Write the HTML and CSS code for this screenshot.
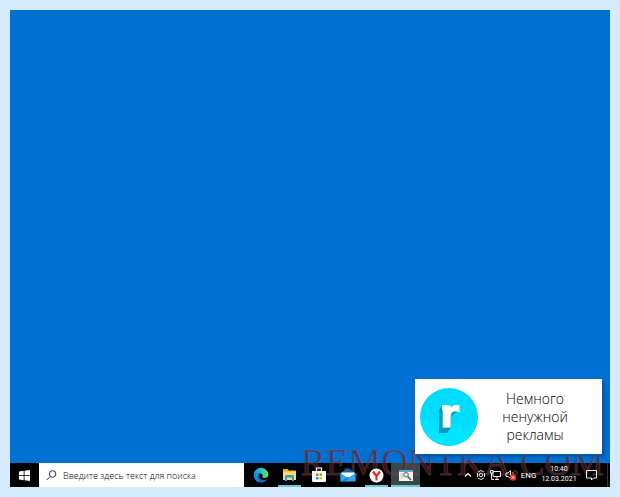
FILE: index.html
```html
<!DOCTYPE html>
<html lang="ru">
<head>
<meta charset="utf-8">
<title>Рабочий стол</title>
<link rel="stylesheet" href="styles.css">
</head>
<body>
<main class="desktop">
  <section class="wallpaper">
    <aside class="toast">
      <svg class="toast-logo" viewBox="0 0 58 58" aria-hidden="true">
        <circle cx="29" cy="29" r="29" fill="#00dcfc"/>
        <path d="M1 36Q8 29 15 34Q22 42 31 37Q39 35 43 41Q50 37 56 39A29 29 0 0 1 1 36Z" fill="#00e5ff"/>
        <path d="M22 18L19 22V45H27L31 40V28L37 24V19Z" fill="#079cb4"/>
        <path d="M22 17H27V22H22Z" fill="#fff"/>
        <text class="logo-letter" x="20" y="39">r</text>
      </svg>
      <p class="toast-text">Немного ненужной рекламы</p>
    </aside>
  </section>
  <footer class="taskbar">
    <button class="start" aria-label="Пуск">
      <svg width="11" height="11" viewBox="0 0 11 11" fill="#fff"><path d="M0 1.5L4.7 .8V5H0ZM5.5 .7L11 0V5H5.500ZM0 5.800H4.700V10.200L0 9.500ZM5.500 5.800H11V11L5.500 10.300Z"/></svg>
    </button>
    <label class="search">
      <svg width="11" height="11" viewBox="0 0 11 11" fill="none" stroke="#333" stroke-width="1"><circle cx="6.600" cy="4" r="3.300"/><path d="M4.200 6.400L.7 10"/></svg>
      <input type="text" placeholder="Введите здесь текст для поиска" aria-label="Поиск">
    </label>
    <nav class="apps">
      <button class="app" aria-label="Edge">
        <svg width="16" height="16" viewBox="0 0 16 16">
          <defs>
            <linearGradient id="sea" x1="0" x2="1"><stop stop-color="#159de9"/><stop offset=".5" stop-color="#22c3cf"/><stop offset="1" stop-color="#66df4d"/></linearGradient>
            <linearGradient id="deep" x2="0" y2="1"><stop stop-color="#1698e8"/><stop offset="1" stop-color="#0a86dd"/></linearGradient>
          </defs>
          <path d="M.7 8A7.400 7.400 0 0 1 15.400 7Q15.600 11 11.600 11Q8.500 11 9.400 9.200Q10 7 7.500 6.500Q3.500 5 .7 8Z" fill="url(#sea)"/>
          <path d="M.7 8Q3 4.700 6.500 6Q4 11 9 13Q12 14 14 12Q11.500 15.700 7.700 15.500Q1 15 .7 8Z" fill="url(#deep)"/>
          <path d="M6.500 7Q5 12.500 10 13Q12.300 13.300 14 12Q12 15.500 9 15.200Q4.500 14 4.500 10Q4.600 7.800 6.500 7Z" fill="#1268bd"/>
        </svg>
      </button>
      <button class="app running" aria-label="Проводник">
        <svg width="15" height="14" viewBox="0 0 15 14"><path d="M1 1H5.500L7 2.500H14V5H1Z" fill="#eeb51d"/><path d="M1 3.500H14V12H1Z" fill="#ffdc5c"/><path d="M3 13V8.500Q3 7 4.500 7H10.500Q12 7 12 8.500V13H10V9.500H5V13Z" fill="#269be8"/></svg>
      </button>
      <button class="app" aria-label="Магазин">
        <svg width="16" height="16" viewBox="0 0 16 16"><path d="M5.500 5V1H10.500V5" fill="none" stroke="#fff" stroke-width="1.200"/><path d="M1 4H15V13.500Q15 15 13.500 15H2.500Q1 15 1 13.500Z" fill="#fff"/><path d="M5 6.500H7.500V9H5Z" fill="#f25022"/><path d="M8.500 6.500H11V9H8.500Z" fill="#7fba00"/><path d="M5 10H7.500V12.500H5Z" fill="#00a4ef"/><path d="M8.500 10H11V12.500H8.500Z" fill="#ffb900"/></svg>
      </button>
      <button class="app" aria-label="Почта">
        <svg width="16" height="16" viewBox="0 0 16 16"><path d="M.5 6L8 1L15.500 6V14H.5Z" fill="#1167b1"/><path d="M1.500 5.500H14.500V9L8 13L1.500 9Z" fill="#fff"/><path d="M.5 6L8 11L15.500 6V14.500H.5Z" fill="#2caaf4"/><path d="M.5 14.500L8 9.800L10 11L4 14.500Z" fill="#1588db"/></svg>
      </button>
      <button class="app running" aria-label="Яндекс Браузер">
        <svg width="15" height="15" viewBox="0 0 15 15"><circle cx="7.500" cy="7.500" r="7" fill="#fff"/><path d="M4 3.500L7.500 8L11 3.500M7.500 7.500V12.500" fill="none" stroke="#ef2018" stroke-width="2.100"/></svg>
      </button>
      <button class="app running active" aria-label="Просмотр окна">
        <svg width="14" height="13" viewBox="0 0 14 13"><path d="M0 1H14V12H0Z" fill="#f3f3ee"/><path d="M0 1H14V3H0Z" fill="#58a9d8"/><path d="M1.500 5H4M1.500 7H4M1.500 9H4" stroke="#9ba8ad" stroke-width=".7"/><circle cx="7" cy="5.700" r="2.300" fill="#dceff6" stroke="#555" stroke-width=".9"/><path d="M8.700 7.500L12 11" stroke="#555" stroke-width="1.500"/></svg>
      </button>
    </nav>
    <div class="tray">
      <button aria-label="Скрытые значки"><svg width="8" height="10" viewBox="0 0 8 10" fill="none" stroke="#fff" stroke-width="1.100"><path d="M1 6.500L4 3.500L7 6.500"/></svg></button>
      <button aria-label="Собрание"><svg width="10" height="12" viewBox="0 0 10 12" fill="none" stroke="#e4e4e4"><path d="M2 3Q5 0 8 3M2 9Q5 12 8 9M1.500 4V8M8.500 4V8"/><circle cx="5" cy="6" r="1.800"/></svg></button>
      <button aria-label="Сеть"><svg width="11" height="12" viewBox="0 0 11 12" fill="none" stroke="#e8e8e8"><path d="M3 2.500H10.500V7.500H3ZM5 10.500H9M7 7.500V10M.5 1.500H3V4H.5ZM1.500 4V10.500H4"/></svg></button>
      <button aria-label="Звук отключён"><svg width="12" height="12" viewBox="0 0 12 12"><path d="M1 4H3L5.500 1.500V9.500L3 7.500H1Z" fill="none" stroke="#eee"/><path d="M7 3Q9 5 8 6" fill="none" stroke="#999"/><circle cx="8" cy="8.500" r="3.200" fill="#e32b22"/><path d="M6.700 7.200L9.300 9.800M9.300 7.200L6.700 9.800" stroke="#fff" stroke-width=".9"/></svg></button>
    </div>
    <button class="language">ENG</button>
    <time class="clock" datetime="2021-03-12T10:40">10:40<br>12.03.2021</time>
    <button class="notifications" aria-label="Уведомления"><svg width="11" height="12" viewBox="0 0 11 12" fill="none" stroke="#eee"><path d="M.5 1.500H10.500V9H7.500L5.500 11V9H.5Z"/></svg></button>
    <button class="show-desktop" aria-label="Свернуть все окна"></button>
  </footer>
  <div class="watermark">REMONTKA.COM</div>
</main>
</body>
</html>
```
FILE: styles.css
```css
* { box-sizing: border-box; }
body {
  margin: 0;
  padding: 10px;
  min-height: 100vh;
  display: flex;
  background: #d5ebff;
  font-family: "Open Sans", "Noto Sans", sans-serif;
}
button {
  margin: 0;
  padding: 0;
  border: 0;
  background: none;
  color: #fff;
  font: inherit;
  display: flex;
  align-items: center;
  justify-content: center;
}
svg { display: block; flex: none; }
.desktop {
  position: relative;
  flex: 1;
  display: flex;
  flex-direction: column;
  overflow: hidden;
  background: #0070d3;
}
.wallpaper {
  flex: 1;
  display: flex;
  align-items: flex-end;
  justify-content: flex-end;
  padding: 9px 8px;
}
.toast {
  position: relative;
  z-index: 2;
  display: flex;
  align-items: center;
  gap: 8px;
  padding: 9px 18px 8px 5px;
  background: #fff;
  box-shadow: 3px 3px 3px #0058a8;
}
.toast-logo { width: 58px; height: 58px; }
.logo-letter {
  font: bold 38px "DejaVu Sans", sans-serif;
  fill: #fff;
  stroke: #fff;
  stroke-width: 1px;
}
.toast-text {
  margin: 0;
  width: 98px;
  font-size: 14px;
  font-weight: 300;
  line-height: 18px;
  text-align: center;
  color: #000;
}
.taskbar {
  height: 24px;
  display: flex;
  background: #020203;
  color: #fff;
}
.start { width: 29px; }
.search {
  width: 205px;
  display: flex;
  align-items: center;
  gap: 6px;
  padding-left: 7px;
  background: #fff;
}
.search input {
  flex: 1;
  min-width: 0;
  padding: 0;
  border: 0;
  outline: 0;
  background: none;
  font: 300 9px "Open Sans", "Noto Sans", sans-serif;
}
.search input::placeholder { color: #000; opacity: 1; }
.apps {
  display: flex;
  padding-left: 2px;
}
.app {
  position: relative;
  width: 29px;
}
.taskbar svg,
.language,
.clock {
  position: relative;
  z-index: 2;
}
.running::after {
  content: "";
  position: absolute;
  bottom: 0;
  left: 3px;
  right: 3px;
  height: 2px;
  background: #69c6dc;
}
.active { background: #3b464b; }
.active::after { left: 0; right: 0; }
.tray {
  margin-left: auto;
  display: flex;
  align-items: center;
  gap: 4px;
}
.language {
  width: 17px;
  margin-left: 3px;
  font: 8px Roboto, sans-serif;
}
.clock {
  width: 44px;
  padding-top: 1px;
  font: 7px/10px Roboto, sans-serif;
  text-align: center;
  white-space: nowrap;
}
.notifications { width: 20px; }
.show-desktop {
  width: 3px;
  margin-left: 6px;
  border-left: 1px solid #333;
}
.watermark {
  position: absolute;
  right: 6px;
  bottom: 4px;
  z-index: 1;
  font: 37px/40px "Liberation Serif", serif;
  color: rgba(100, 25, 30, 0.6);
  -webkit-text-stroke: 1px rgba(150, 120, 140, 0.3);
  white-space: nowrap;
  pointer-events: none;
}
```
